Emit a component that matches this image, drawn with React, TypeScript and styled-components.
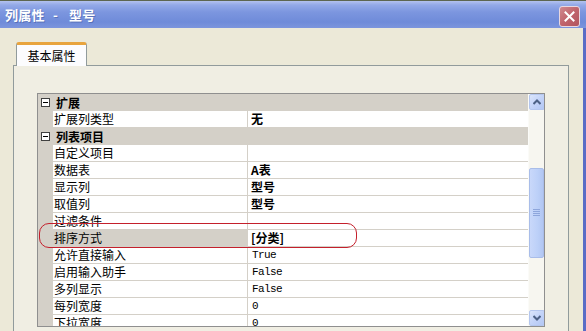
import React from 'react';
import styled, { createGlobalStyle } from 'styled-components';

const Global = createGlobalStyle`
  html, body { margin: 0; padding: 0; width: 586px; height: 331px; overflow: hidden; background: #ECE9D8; }
  #root { width: 586px; height: 331px; }
  * { box-sizing: border-box; }
`;

const CJK = `"Noto Sans CJK SC", "Noto Sans", sans-serif`;

const Window = styled.div`
  position: relative;
  width: 586px;
  height: 331px;
  display: flex;
  flex-direction: column;
  background: #ECE9D8;
  font-family: ${CJK};
  font-size: 12px;
  color: #000;
`;

const TitleBar = styled.div`
  height: 28px;
  flex: none;
  display: flex;
  align-items: center;
  justify-content: space-between;
  padding: 0 6px 0 5px;
  background: linear-gradient(to bottom, #5d6651 0, #5d6651 1px, #b3c2ef 1px, #93a9e8 5px, #7c96df 12px, #6f8bd9 22px, #7c95dd 28px);
`;

const Title = styled.div`
  display: flex;
  align-items: center;
  color: #fff;
  font-weight: bold;
  font-size: 13px;
  letter-spacing: 0.3px;
  text-shadow: 1px 1px 0 rgba(40, 60, 120, 0.35);
  white-space: pre;
`;

const Dash = styled.span`
  margin: 0 11px 0 8px;
`;

const CloseButton = styled.div`
  width: 21px;
  height: 21px;
  margin-top: 4px;
  border: 1px solid #e8d8e0;
  border-radius: 3px;
  background: linear-gradient(135deg, #d08a90 0%, #c0646c 50%, #b2555e 100%);
  display: flex;
  align-items: center;
  justify-content: center;
`;

const Body = styled.div`
  flex: 1;
  display: flex;
  flex-direction: column;
  padding: 14px 14px 0 13px;
  border-right: 3px solid #5a6cc6;
  min-height: 0;
`;

const TabStrip = styled.div`
  display: flex;
  padding-left: 3px;
  height: 23px;
  flex: none;
`;

const Tab = styled.div`
  position: relative;
  z-index: 1;
  width: 71px;
  height: 24px;
  border: 1px solid #919b9c;
  border-bottom: none;
  border-top: 3px solid #e8a43e;
  border-radius: 3px 3px 0 0;
  background: #fcfcfe;
  display: flex;
  align-items: center;
  justify-content: center;
  padding-bottom: 1px;
  font-size: 12px;
`;

const Panel = styled.div`
  flex: 1;
  min-height: 0;
  border: 1px solid #919b9c;
  border-bottom: none;
  background: #f0eee3;
  padding: 27px 23px 0 23px;
`;

const Grid = styled.div`
  height: 234px;
  border: 1px solid #8f8f8f;
  background: #fff;
  display: flex;
  overflow: hidden;
`;

const Rows = styled.div`
  width: 490px;
  display: flex;
  flex-direction: column;
  overflow: hidden;
`;

const Row = styled.div`
  flex: none;
  height: 17px;
  display: grid;
  grid-template-columns: 15px 195px 280px;
`;

const Gutter = styled.div`
  background: #d4d0c8;
`;

const NameCell = styled.div<{ $selected?: boolean }>`
  background: ${p => (p.$selected ? '#d4d0c8' : '#fff')};
  border-bottom: 1px solid #d4d0c8;
  border-right: 1px solid #d4d0c8;
  padding-left: 1px;
  line-height: 16px;
  white-space: nowrap;
  overflow: hidden;
`;

const ValueCell = styled.div<{ $bold?: boolean; $mono?: boolean }>`
  background: #fff;
  border-bottom: 1px solid #d4d0c8;
  padding-left: ${p => (p.$mono ? '4px' : '3px')};
  line-height: 16px;
  white-space: nowrap;
  overflow: hidden;
  font-weight: ${p => (p.$bold ? 'bold' : 'normal')};
  font-family: ${p => (p.$mono ? `"Liberation Mono", monospace` : CJK)};
  font-size: ${p => (p.$mono ? '11px' : '12px')};
  letter-spacing: ${p => (p.$mono ? '-0.6px' : '0')};
`;

const GroupRow = styled.div`
  flex: none;
  height: 17px;
  display: flex;
  align-items: center;
  background: #d4d0c8;
  font-weight: bold;
  line-height: 16px;
`;

const ToggleBox = styled.div`
  width: 9px;
  height: 9px;
  margin: 0 6px 0 3px;
  border: 1px solid #404040;
  background: #fff;
  position: relative;
  &::after {
    content: '';
    position: absolute;
    left: 1px;
    top: 3px;
    width: 5px;
    height: 1px;
    background: #000;
  }
`;

const Scrollbar = styled.div`
  width: 16px;
  display: flex;
  flex-direction: column;
  background: #f7f6f0;
  border-left: 1px solid #fbfbf8;
`;

const ArrowButton = styled.div`
  width: 16px;
  height: 16px;
  flex: none;
  border: 1px solid #b4c6ee;
  border-radius: 2px;
  background: linear-gradient(135deg, #dbe5fb 0%, #c3d3f8 50%, #b3c7f4 100%);
  display: flex;
  align-items: center;
  justify-content: center;
`;

const Thumb = styled.div`
  flex: none;
  margin-top: 58px;
  height: 90px;
  border: 1px solid #a9bde9;
  border-radius: 2px;
  background: linear-gradient(to right, #c9d8fa, #bcd0f8 60%, #b2c6f2);
  display: flex;
  align-items: center;
  justify-content: center;
`;

const Spacer = styled.div`
  flex: 1;
`;

const Annotation = styled.div`
  position: absolute;
  left: 39px;
  top: 223px;
  width: 318px;
  height: 25px;
  border: 1.5px solid #c4202c;
  border-radius: 10px;
  pointer-events: none;
`;

type Item =
  | { group: string }
  | { name: string; value: string; bold?: boolean; mono?: boolean; selected?: boolean };

const items: Item[] = [
  { group: '扩展' },
  { name: '扩展列类型', value: '无', bold: true },
  { group: '列表项目' },
  { name: '自定义项目', value: '' },
  { name: '数据表', value: 'A表', bold: true },
  { name: '显示列', value: '型号', bold: true },
  { name: '取值列', value: '型号', bold: true },
  { name: '过滤条件', value: '' },
  { name: '排序方式', value: '[分类]', bold: true, selected: true },
  { name: '允许直接输入', value: 'True', mono: true },
  { name: '启用输入助手', value: 'False', mono: true },
  { name: '多列显示', value: 'False', mono: true },
  { name: '每列宽度', value: '0', mono: true },
  { name: '下拉宽度', value: '0', mono: true },
];

export default function App() {
  return (
    <>
      <Global />
      <Window>
        <TitleBar>
          <Title>
            列属性<Dash>-</Dash>型号
          </Title>
          <CloseButton>
            <svg width="11" height="11" viewBox="0 0 11 11">
              <path d="M1.5 1.5 L9.5 9.5 M9.5 1.5 L1.5 9.5" stroke="#fff" strokeWidth="2" strokeLinecap="square" />
            </svg>
          </CloseButton>
        </TitleBar>
        <Body>
          <TabStrip>
            <Tab>基本属性</Tab>
          </TabStrip>
          <Panel>
            <Grid>
              <Rows>
                {items.map((it, i) =>
                  'group' in it ? (
                    <GroupRow key={i}>
                      <ToggleBox />
                      {it.group}
                    </GroupRow>
                  ) : (
                    <Row key={i}>
                      <Gutter />
                      <NameCell $selected={it.selected}>{it.name}</NameCell>
                      <ValueCell $bold={it.bold} $mono={it.mono}>{it.value}</ValueCell>
                    </Row>
                  )
                )}
              </Rows>
              <Scrollbar>
                <ArrowButton>
                  <svg width="8" height="6" viewBox="0 0 8 6">
                    <path d="M0.5 5 L4 1.5 L7.5 5" stroke="#4d6185" strokeWidth="2" fill="none" />
                  </svg>
                </ArrowButton>
                <Thumb>
                  <svg width="7" height="8" viewBox="0 0 7 8">
                    <path d="M0 0.5 H7 M0 2.5 H7 M0 4.5 H7 M0 6.5 H7" stroke="#8ea6dc" strokeWidth="1" />
                  </svg>
                </Thumb>
                <Spacer />
                <ArrowButton>
                  <svg width="8" height="6" viewBox="0 0 8 6">
                    <path d="M0.5 1 L4 4.5 L7.5 1" stroke="#4d6185" strokeWidth="2" fill="none" />
                  </svg>
                </ArrowButton>
              </Scrollbar>
            </Grid>
          </Panel>
        </Body>
        <Annotation />
      </Window>
    </>
  );
}
